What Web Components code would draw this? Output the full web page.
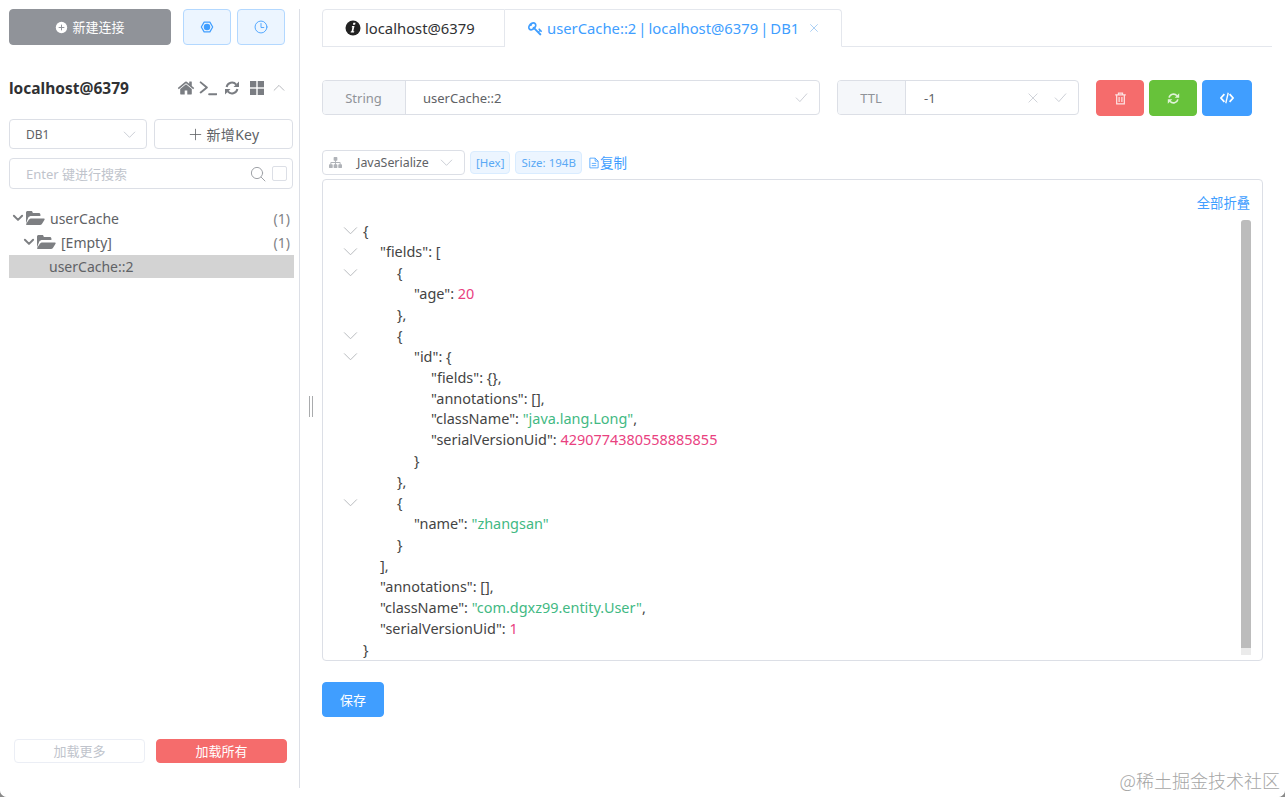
<!DOCTYPE html>
<html lang="zh">
<head>
<meta charset="utf-8">
<title>RedisDesktopManager</title>
<style>
  html { background: #8a8a8a; }
  body { margin: 0; height: 797px; overflow: hidden; background: #fff; border-radius: 0 0 7px 7px;
    font-family: "Noto Sans", "Noto Sans CJK SC", sans-serif; color: #606266; }
</style>
</head>
<body>
<rdm-app></rdm-app>
<script>
// Icon set
const fa = (d, vb = '0 0 1792 1792') => `<svg viewBox="${vb}" fill="currentColor"><path d="${d}"/></svg>`;
const line = (inner, w = 1.3) => `<svg viewBox="0 0 16 16" fill="none" stroke="currentColor" stroke-width="${w}" stroke-linecap="round" stroke-linejoin="round">${inner}</svg>`;
const ICONS = {
  home: fa('M1472 992v480q0 26-19 45t-45 19h-384v-384h-256v384h-384q-26 0-45-19t-19-45v-480q0-1 .5-3t.5-3l575-474 575 474q1 2 1 6zm223-69l-62 74q-8 9-21 11h-3q-13 0-21-7l-692-577-692 577q-12 8-24 7-13-2-21-11l-62-74q-8-10-7-23.5t11-21.5l719-599q32-26 76-26t76 26l244 204v-195q0-14 9-23t23-9h192q14 0 23 9t9 23v408l219 182q10 8 11 21.5t-7 23.5z'),
  refresh: `<svg viewBox="0 0 16 16" fill="none" stroke="currentColor" stroke-width="2"><path d="M2.600 7A5.500 5.500 0 0 1 12.200 4.600"/><path d="M13.400 9A5.500 5.500 0 0 1 3.800 11.400"/><path fill="currentColor" stroke="none" d="M15 1.500V7H9.500zM1 14.500V9H6.500z"/></svg>`,
  key: fa('M832 512q0-80-56-136t-136-56-136 56-56 136q0 42 19 83-41-19-83-19-80 0-136 56t-56 136 56 136 136 56 136-56 56-136q0-42-19-83 41 19 83 19 80 0 136-56t56-136zm851 704q0 17-49 66t-66 49q-9 0-28.5-16t-36.5-33-38.5-40-24.5-26l-96 96 220 220q28 28 28 68 0 42-39 81t-81 39q-40 0-68-28l-671-671q-176 131-365 131-163 0-265.5-102.5t-102.5-265.5q0-160 95-313t248-248 313-95q163 0 265.5 102.5t102.5 265.5q0 189-131 365l355 355 96-96q-2-2-26-24.5t-40-38.5-33-36.5-16-28.5q0-17 49-66t66-49q13 0 23 10 6 6 46 44.5t82 79.5 86.5 86 73 78 28.5 41z'),
  code: `<svg viewBox="0 0 16 16" fill="none" stroke="currentColor" stroke-width="2"><path d="M5 3.500 1 8l4 4.500M11 3.500 15 8l-4 4.500"/><path stroke-width="1.500" d="M9.400 2 6.600 14"/></svg>`,
  sitemap: fa('M1792 1248v320q0 40-28 68t-68 28h-320q-40 0-68-28t-28-68v-320q0-40 28-68t68-28h96v-192h-512v192h96q40 0 68 28t28 68v320q0 40-28 68t-68 28h-320q-40 0-68-28t-28-68v-320q0-40 28-68t68-28h96v-192h-512v192h96q40 0 68 28t28 68v320q0 40-28 68t-68 28h-320q-40 0-68-28t-28-68v-320q0-40 28-68t68-28h96v-192q0-52 38-90t90-38h512v-192h-96q-40 0-68-28t-28-68v-320q0-40 28-68t68-28h320q40 0 68 28t28 68v320q0 40-28 68t-68 28h-96v192h512q52 0 90 38t38 90v192h96q40 0 68 28t28 68z'),
  folder: `<svg viewBox="0 0 20 16" fill="currentColor"><path d="M1 13.600V2.600C1 1.700 1.700 1 2.600 1h3.600c.8 0 1.500.7 1.500 1.500V3h6.100c.9 0 1.600.7 1.600 1.600V6H6.200c-1 0-2.200.6-2.900 1.400z"/><path d="M2.300 15h12.300c.8 0 1.800-.5 2.300-1.100l2.500-3.800c.6-.9.2-1.600-.8-1.600H6.300c-.8 0-1.800.5-2.300 1.100l-2.600 3.800c-.6.9-.2 1.600.9 1.600z"/></svg>`,
  grid: `<svg viewBox="0 0 16 16" fill="currentColor"><rect x="1" y="1" width="6.300" height="6.300"/><rect x="8.700" y="1" width="6.300" height="6.300"/><rect x="1" y="8.700" width="6.300" height="6.300"/><rect x="8.700" y="8.700" width="6.300" height="6.300"/></svg>`,
  terminal: line('<path d="M1.500 3 7 7.500 1.500 12M9 13.500h6.500"/>', 1.7),
  info: `<svg viewBox="0 0 16 16"><circle cx="8" cy="8" r="7.500" fill="#222"/><path fill="#fff" d="M8.300 2.800h2.200l-.4 2H7.900zM7.200 6h2.300l-1.200 5.300h1l-.3 1.200H5.600l.3-1.200h.7l.8-4.100h-.8z"/></svg>`,
  plusCircle: `<svg viewBox="0 0 16 16"><circle cx="8" cy="8" r="7" fill="currentColor"/><path d="M8 4.500v7M4.500 8h7" stroke="#909399" stroke-width="1.200"/></svg>`,
  gear: `<svg viewBox="0 0 16 16" fill="none" stroke="currentColor"><path stroke-width="1.400" d="M1.500 8 4.700 2.400H11.300L14.500 8 11.300 13.600H4.700z" stroke-linejoin="round"/><circle cx="8" cy="8" r="3.700" fill="currentColor" stroke="none"/></svg>`,
  clock: line('<circle cx="8" cy="8" r="6.800"/><path d="M8 4v4.600h3.200"/>', 1),
  chevDown: line('<path d="M1.500 5 8 11.500 14.500 5"/>', 1),
  chevUp: line('<path d="M1.500 11 8 4.500 14.500 11"/>', 1),
  chevBold: line('<path d="M2.500 5 8 10.500 13.500 5"/>', 2.600),
  plus: line('<path d="M8 1.500v13M1.500 8h13"/>', 1),
  search: line('<circle cx="7" cy="7" r="5.600"/><path d="M11.200 11.200 15 15"/>', 1),
  check: line('<path d="M1.500 8.500 6 13 14.500 3.500"/>', 1),
  close: line('<path d="M2.500 2.500l11 11M13.500 2.500l-11 11"/>', 1),
  trash: `<svg viewBox="0 0 16 16" fill="none" stroke="currentColor" stroke-width="1.500"><path d="M1.500 3.500h13M5.500 3.300V1.300h5v2M3.300 3.800v10.900h9.400V3.800M6.300 6.200v6M9.700 6.200v6"/></svg>`,
  doc: `<svg viewBox="0 0 16 16" fill="none" stroke="currentColor" stroke-width="1.100"><path d="M2.500 1.500h7l4 4v9h-11zM9.500 1.500v4h4M5 8.500h6M5 11.500h6"/></svg>`,
};

// Base element: shadow root filled from a template string
class Base extends HTMLElement {
  constructor() {
    super();
    this.attachShadow({ mode: 'open' });
    this.shadowRoot.innerHTML = `<style>${this.css()}</style>${this.html()}`;
  }
  css() { return ':host{display:block}'; }
  html() { return '<slot></slot>'; }
}

class RdmIcon extends HTMLElement {
  constructor() {
    super();
    this.attachShadow({ mode: 'open' });
  }
  connectedCallback() {
    const size = this.getAttribute('size') || 14;
    this.shadowRoot.innerHTML = `<style>:host{display:inline-flex;flex:none;width:${size}px;height:${size}px}svg{display:block;width:100%;height:100%}</style>${ICONS[this.getAttribute('name')]}`;
  }
}
customElements.define('rdm-icon', RdmIcon);

// Buttons (element-ui look)
class RdmButton extends Base {
  css() {
    return `
      :host { display: inline-flex; align-items: center; justify-content: center; gap: 4px; box-sizing: border-box;
        border: 1px solid #dcdfe6; border-radius: 4px; background: #fff; color: #606266; font-size: 12px; flex: none; }
      :host([kind=grey]) { background: #909399; border-color: #909399; color: #fff; padding-bottom: 2px; }
      :host([kind=plain]) { background: #ecf5ff; border-color: #b3d8ff; color: #409eff; }
      :host([kind=danger]) { background: #f56c6c; border-color: #f56c6c; color: #fff; }
      :host([kind=success]) { background: #67c23a; border-color: #67c23a; color: #fff; }
      :host([kind=primary]) { background: #409eff; border-color: #409eff; color: #fff; }
      :host([kind=muted]) { border-color: #ebeef5; color: #c0c4cc; }
    `;
  }
}
customElements.define('rdm-button', RdmButton);

class RdmSelect extends Base {
  css() {
    return `
      :host { display: flex; align-items: center; box-sizing: border-box; border: 1px solid #dcdfe6; border-radius: 4px;
        background: #fff; font-size: 12px; color: #606266; padding: 0 10px 0 16px; }
      span { flex: 1; }
      rdm-icon { color: #c0c4cc; }
    `;
  }
  html() { return `<slot name="lead"></slot><span><slot></slot></span><rdm-icon name="chevDown" size="13"></rdm-icon>`; }
}
customElements.define('rdm-select', RdmSelect);

// Input with grey prepend
class RdmField extends Base {
  css() {
    return `
      :host { display: flex; box-sizing: border-box; height: 35px; border: 1px solid #dcdfe6; border-radius: 4px;
        background: #fff; font-size: 13px; color: #606266; overflow: hidden; }
      .pre { flex: none; display: flex; align-items: center; justify-content: center; background: #f5f7fa;
        border-right: 1px solid #dcdfe6; color: #909399; width: var(--pre, 81px); padding-right: 1px; box-sizing: content-box; }
      .val { flex: 1; display: flex; align-items: center; padding-left: var(--val, 17px); }
      .tail { display: flex; align-items: center; gap: 15px; padding-right: 11px; color: #c0c4cc; }
    `;
  }
  html() { return `<div class="pre"><slot name="label"></slot></div><div class="val"><slot></slot></div><div class="tail"><slot name="tail"></slot></div>`; }
}
customElements.define('rdm-field', RdmField);

class RdmTag extends Base {
  css() {
    return `:host { display: inline-flex; align-items: center; height: 23px; box-sizing: border-box; padding: 0 5px;
      border: 1px solid #d9ecff; border-radius: 4px; background: #ecf5ff; color: #5aa9f5; font-size: 11.500px; }`;
  }
}
customElements.define('rdm-tag', RdmTag);

class RdmTreeRow extends Base {
  css() {
    return `
      :host { display: flex; align-items: center; height: 24px; font-size: 14px; color: #606266; padding-right: 3px; }
      :host([selected]) { background: #d3d3d3; margin: 1px -1px 0 0; padding-left: 34px; height: 23px; }
      rdm-icon { color: #7d7f82; }
      .name { flex: 1; margin-left: 5px; }
      :host([selected]) .name { margin-left: 6px; }
      .count { color: #7f8286; font-size: 14px; }
    `;
  }
  html() {
    const folder = this.hasAttribute('folder');
    const count = this.getAttribute('count');
    return `${folder ? '<rdm-icon name="chevBold" size="12"></rdm-icon><rdm-icon name="folder" size="20" style="margin-left:1px"></rdm-icon>' : ''}
      <span class="name"><slot></slot></span>${count ? `<span class="count">(${count})</span>` : ''}`;
  }
}
customElements.define('rdm-tree-row', RdmTreeRow);

class RdmSidebar extends Base {
  css() {
    return `
      :host { display: flex; flex-direction: column; box-sizing: border-box; width: 300px; height: 779px;
        padding: 0 6px 25px 9px; border-right: 1px solid #dcdfe6; flex: none; }
      .top { display: flex; gap: 6px; }
      .top .new { width: 162px; height: 36px; margin-right: 6px; font-size: 13px; }
      .top .sq { width: 48px; height: 36px; }
      .conn { display: flex; align-items: center; height: 36px; margin-top: 25px; color: #7a7d82; }
      .conn b { flex: 1; font-size: 15.500px; color: #303133; }
      .conn .icons { display: flex; align-items: center; padding-right: 8px; }
      .db { display: flex; gap: 7px; height: 30px; margin-top: 13px; }
      .db rdm-select { width: 138px; }
      .db rdm-button { width: 139px; font-size: 14px; gap: 5px; padding-left: 1px; letter-spacing: .3px; }
      .search { display: flex; align-items: center; box-sizing: border-box; height: 31px; margin-top: 9px; padding: 0 5px 0 16px;
        border: 1px solid #dcdfe6; border-radius: 4px; font-size: 13px; color: #c0c4cc; }
      .search span { flex: 1; }
      .search .box { width: 13px; height: 13px; border: 1px solid #dcdfe6; border-radius: 2px; margin-left: 6px; }
      .search rdm-icon { color: #a0a3a8; }
      .tree { margin-top: 17px; }
      .foot { display: flex; justify-content: space-between; margin-top: auto; padding: 0 6px 0 5px; }
      .foot rdm-button { width: 131px; height: 24px; font-size: 13px; padding-bottom: 2px; }
    `;
  }
  html() {
    return `
      <div class="top">
        <rdm-button class="new" kind="grey"><rdm-icon name="plusCircle" size="13" style="margin-top:2px"></rdm-icon>新建连接</rdm-button>
        <rdm-button class="sq" kind="plain"><rdm-icon name="gear" size="14"></rdm-icon></rdm-button>
        <rdm-button class="sq" kind="plain"><rdm-icon name="clock" size="14"></rdm-icon></rdm-button>
      </div>
      <div class="conn">
        <b>localhost@6379</b>
        <div class="icons">
          <rdm-icon name="home" size="18"></rdm-icon>
          <rdm-icon name="terminal" size="18" style="margin-left:4px"></rdm-icon>
          <rdm-icon name="refresh" size="16" style="margin-left:7px"></rdm-icon>
          <rdm-icon name="grid" size="16" style="margin-left:9px"></rdm-icon>
          <rdm-icon name="chevUp" size="12" style="color:#a0a3a8;margin-left:8px"></rdm-icon>
        </div>
      </div>
      <div class="db">
        <rdm-select>DB1</rdm-select>
        <rdm-button><rdm-icon name="plus" size="13"></rdm-icon>新增Key</rdm-button>
      </div>
      <div class="search"><span>Enter 键进行搜索</span><rdm-icon name="search" size="16"></rdm-icon><div class="box"></div></div>
      <div class="tree">
        <rdm-tree-row folder count="1" style="padding-left:3px">userCache</rdm-tree-row>
        <rdm-tree-row folder count="1" style="padding-left:14px">[Empty]</rdm-tree-row>
        <rdm-tree-row selected>userCache::2</rdm-tree-row>
      </div>
      <div class="foot">
        <rdm-button kind="muted">加载更多</rdm-button>
        <rdm-button kind="danger">加载所有</rdm-button>
      </div>
    `;
  }
}
customElements.define('rdm-sidebar', RdmSidebar);

class RdmTabs extends Base {
  css() {
    return `
      :host { display: flex; height: 38px; box-sizing: border-box; border-bottom: 1px solid #e4e7ed; font-size: 14.800px; color: #303133; }
      .tab { display: flex; align-items: center; box-sizing: border-box; height: 38px; border: 1px solid #e4e7ed; border-left: 0; gap: 4px; }
      .a { width: 183px; padding-left: 22px; border-left: 1px solid #e4e7ed; border-radius: 4px 0 0 0; }
      .b { width: 337px; padding-left: 23px; color: #409eff; border-bottom-color: #fff; border-radius: 0 4px 0 0; }
      .b rdm-icon:last-child { color: #7ab4ee; margin-left: 6px; }
      .p { margin: 0 -1.850px; }
      .t { white-space: pre; }
    `;
  }
  html() {
    return `
      <div class="tab a"><rdm-icon name="info" size="16"></rdm-icon>localhost@6379</div>
      <div class="tab b"><rdm-icon name="key" size="15"></rdm-icon><span class="t">userCache::2 <span class="p">|</span> localhost@6379 <span class="p">|</span> DB1</span><rdm-icon name="close" size="10"></rdm-icon></div>
    `;
  }
}
customElements.define('rdm-tabs', RdmTabs);

class JsonLine extends Base {
  css() {
    return `
      :host { display: flex; height: 20.950px; line-height: 21.300px; white-space: nowrap; font-size: 14.450px; color: #444; position: relative; }
      .fold { width: 40px; flex: none; color: #b4b7bb; display: flex; align-items: center; padding-left: 20px; box-sizing: border-box; }
      ::slotted(i) { font-style: normal; color: #42b983; }
      ::slotted(u) { text-decoration: none; color: #e9417f; }
    `;
  }
  html() {
    const lv = +this.getAttribute('lv') || 0;
    return `<div class="fold">${this.hasAttribute('fold') ? '<rdm-icon name="chevDown" size="15"></rdm-icon>' : ''}</div>
      <div style="padding-left:${lv * 17}px"><slot></slot></div>`;
  }
}
customElements.define('json-line', JsonLine);

class RdmEditor extends Base {
  css() {
    return `
      :host { display: block; position: relative; box-sizing: border-box; width: 941px; height: 482px; margin-top: 4px;
        border: 1px solid #dcdfe6; border-radius: 4px; background: #fff; }
      .fold-all { display: flex; justify-content: flex-end; height: 40px; padding: 15px 12px 0 0; box-sizing: border-box; font-size: 13.300px; line-height: 16px; color: #409eff; }
      .bar { position: absolute; left: 918px; top: 40px; width: 10px; height: 428px; background: #bcbcbc; border-radius: 3px 3px 0 0; }
      .bar::after { content: ""; position: absolute; left: 0; top: 428px; width: 10px; height: 7px; background: #ebebeb; }
    `;
  }
  html() {
    return `<div class="fold-all">全部折叠</div><div class="bar"></div><slot></slot>`;
  }
}
customElements.define('rdm-editor', RdmEditor);

class RdmMain extends Base {
  css() {
    return `
      :host { display: block; width: 950px; flex: none; }
      .keyrow { display: flex; margin-top: 33px; height: 36px; }
      .keyrow .name { width: 498px; }
      .keyrow .ttl { width: 242px; margin-left: 17px; --pre: 66px; --val: 18px; }
      .btns { display: flex; gap: 5px; margin-left: 17px; }
      .btns rdm-button { width: 48px; height: 36px; }
      .btns rdm-button:last-child { width: 50px; }
      .fmt { display: flex; align-items: center; gap: 5px; margin-top: 34px; height: 25px; }
      .fmt rdm-select { width: 143px; height: 25px; padding: 0 11px 0 6px; font-size: 12.400px; }
      .fmt .copy { display: flex; align-items: center; color: #409eff; font-size: 13.500px; margin-left: 1px; padding-bottom: 2px; }
      .fmt rdm-icon[slot=lead] { color: #b0b3b8; margin-right: 15px; }
      .save { width: 62px; height: 35px; margin-top: 21px; font-size: 13px; }
    `;
  }
  html() {
    const json = [
      [0, 1, '{'],
      [1, 1, '"fields": ['],
      [2, 1, '{'],
      [3, 0, '"age": <u>20</u>'],
      [2, 0, '},'],
      [2, 1, '{'],
      [3, 1, '"id": {'],
      [4, 0, '"fields": {},'],
      [4, 0, '"annotations": [],'],
      [4, 0, '"className": <i>"java.lang.Long"</i>,'],
      [4, 0, '"serialVersionUid": <u>4290774380558885855</u>'],
      [3, 0, '}'],
      [2, 0, '},'],
      [2, 1, '{'],
      [3, 0, '"name": <i>"zhangsan"</i>'],
      [2, 0, '}'],
      [1, 0, '],'],
      [1, 0, '"annotations": [],'],
      [1, 0, '"className": <i>"com.dgxz99.entity.User"</i>,'],
      [1, 0, '"serialVersionUid": <u>1</u>'],
      [0, 0, '}'],
    ].map(([lv, fold, text]) => `<json-line lv="${lv}" ${fold ? 'fold' : ''}>${text}</json-line>`).join('');
    return `
      <rdm-tabs></rdm-tabs>
      <div class="keyrow">
        <rdm-field class="name"><span slot="label">String</span>userCache::2<rdm-icon slot="tail" name="check" size="13"></rdm-icon></rdm-field>
        <rdm-field class="ttl"><span slot="label">TTL</span>-1<rdm-icon slot="tail" name="close" size="12"></rdm-icon><rdm-icon slot="tail" name="check" size="13"></rdm-icon></rdm-field>
        <div class="btns">
          <rdm-button kind="danger"><rdm-icon name="trash" size="13" style="color:#fde2e2"></rdm-icon></rdm-button>
          <rdm-button kind="success"><rdm-icon name="refresh" size="13" style="color:#e1f3d8"></rdm-icon></rdm-button>
          <rdm-button kind="primary"><rdm-icon name="code" size="14"></rdm-icon></rdm-button>
        </div>
      </div>
      <div class="fmt">
        <rdm-select><rdm-icon slot="lead" name="sitemap" size="13"></rdm-icon>JavaSerialize</rdm-select>
        <rdm-tag>[Hex]</rdm-tag>
        <rdm-tag>Size: 194B</rdm-tag>
        <div class="copy"><rdm-icon name="doc" size="12" style="margin-top:2px"></rdm-icon>复制</div>
      </div>
      <rdm-editor>${json}</rdm-editor>
      <rdm-button class="save" kind="primary">保存</rdm-button>
    `;
  }
}
customElements.define('rdm-main', RdmMain);

class RdmDivider extends Base {
  css() {
    return `
      :host { display: flex; align-items: center; justify-content: center; width: 22px; flex: none; height: 779px; padding-top: 15px; box-sizing: border-box; }
      div { width: 2px; height: 21px; border: 1px solid #a9abad; border-width: 0 1px; margin-left: -1px; }
    `;
  }
  html() { return '<div></div>'; }
}
customElements.define('rdm-divider', RdmDivider);

class RdmWatermark extends Base {
  css() {
    return `:host { position: absolute; right: 5px; bottom: 5px; font-family: "Noto Sans CJK SC", serif; font-size: 18px; line-height: 24px; color: #a5a5a5; font-weight: 300; }`;
  }
  html() { return '@稀土掘金技术社区'; }
}
customElements.define('rdm-watermark', RdmWatermark);

class RdmApp extends Base {
  css() {
    return `:host { display: flex; position: relative; box-sizing: border-box; height: 797px; padding-top: 9px; background: #fff; border-radius: 0 0 7px 7px; overflow: hidden; }`;
  }
  html() { return '<rdm-sidebar></rdm-sidebar><rdm-divider></rdm-divider><rdm-main></rdm-main><rdm-watermark></rdm-watermark>'; }
}
customElements.define('rdm-app', RdmApp);
</script>
</body>
</html>
